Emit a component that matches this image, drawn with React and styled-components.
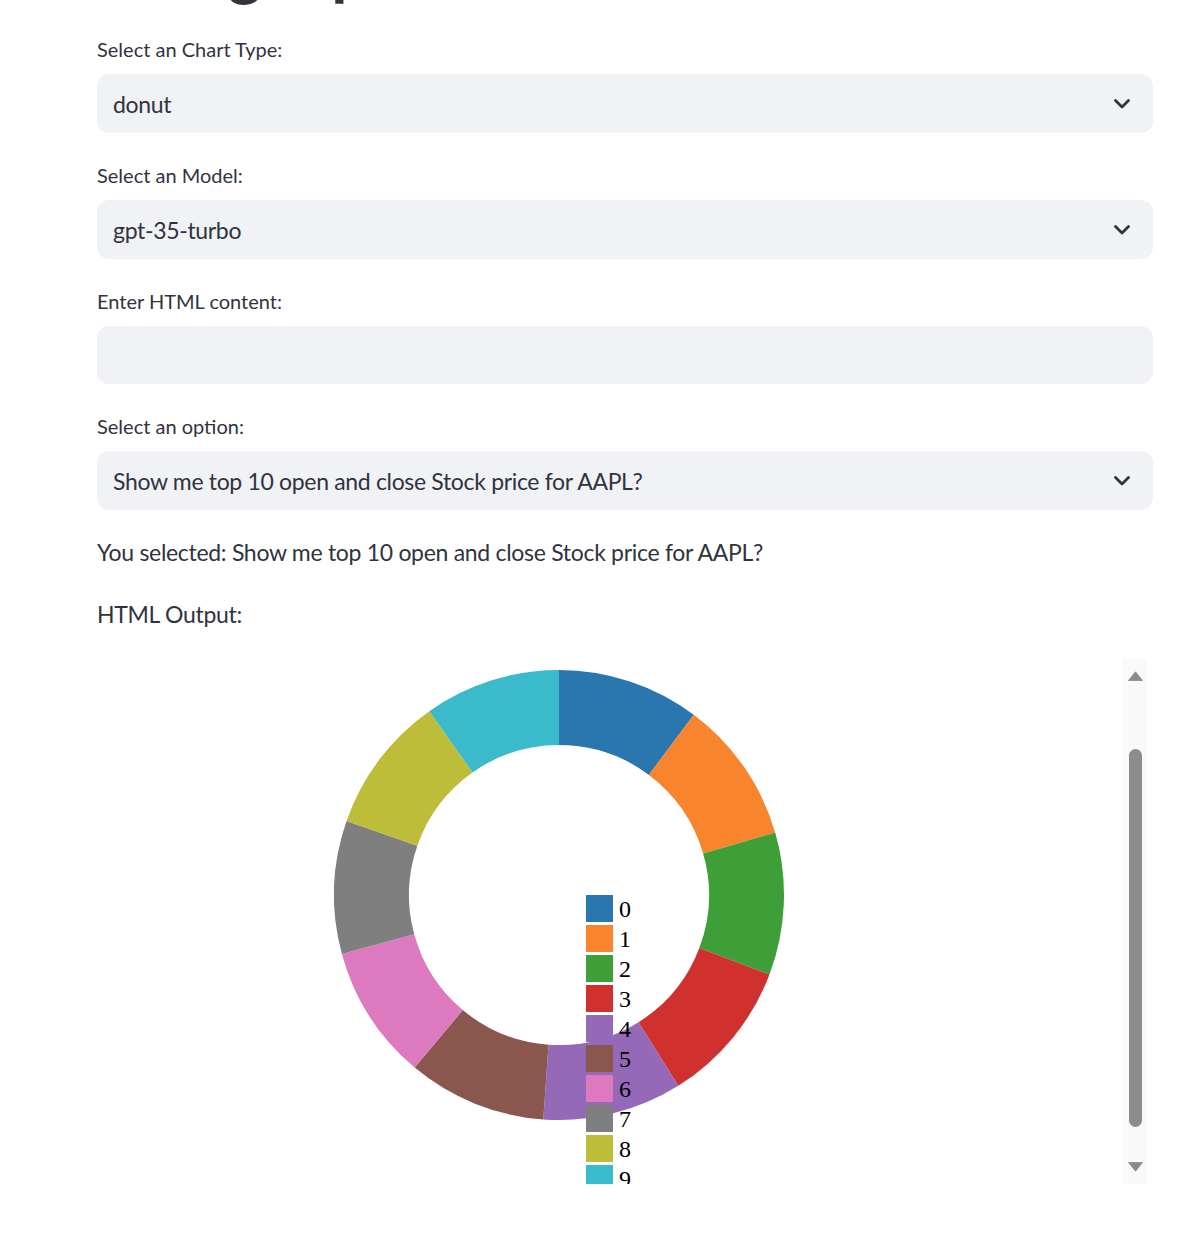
import React from "react";
import styled, { createGlobalStyle } from "styled-components";

const GlobalStyle = createGlobalStyle`
  html, body {
    margin: 0;
    padding: 0;
    background: #ffffff;
  }
  body {
    font-family: Lato, "Open Sans", sans-serif;
    color: #31333f;
    overflow: hidden;
  }
`;

const Page = styled.div`
  width: 1188px;
  height: 1236px;
  overflow: hidden;
`;

const Main = styled.div`
  width: 1056px;
  margin-left: 97px;
  display: flex;
  flex-direction: column;
`;

const Title = styled.h1`
  font-size: 66px;
  font-weight: 700;
  line-height: 1.2;
  margin: -73px 0 0 0;
  color: #31333f;
  white-space: nowrap;
`;

const Field = styled.div`
  display: flex;
  flex-direction: column;
  margin-top: ${(p) => p.$top || 24}px;
`;

const Label = styled.label`
  height: 36px;
  display: flex;
  align-items: center;
  font-size: 20px;
  color: #31333f;
  margin-bottom: 7px;
`;

const SelectBox = styled.div`
  height: 59px;
  border-radius: 12px;
  background: #f0f2f6;
  display: flex;
  align-items: center;
  justify-content: space-between;
  padding: 0 23px 0 16px;
  font-size: 23px;
  letter-spacing: -0.33px;
  color: #31333f;
`;

const TextInput = styled.div`
  height: 58px;
  border-radius: 12px;
  background: #f0f2f6;
`;

const Paragraph = styled.p`
  margin: ${(p) => p.$top}px 0 0 0;
  font-size: 23px;
  line-height: 36px;
  letter-spacing: -0.3px;
  color: #31333f;
`;

const OutputFrame = styled.div`
  width: 1050px;
  height: 525px;
  margin-top: 27px;
  display: flex;
  overflow: hidden;
`;

const ChartArea = styled.div`
  flex: 1;
  overflow: hidden;
`;

const ScrollBar = styled.div`
  width: 24px;
  background: #f9f9f9;
  display: flex;
  flex-direction: column;
  align-items: center;
`;

const ArrowButton = styled.div`
  height: 34px;
  display: flex;
  align-items: center;
  justify-content: center;
`;

const Track = styled.div`
  flex: 1;
  display: flex;
  flex-direction: column;
  align-items: center;
`;

const Thumb = styled.div`
  width: 13px;
  height: 378px;
  margin-top: 56px;
  border-radius: 7px;
  background: #8c8c8c;
`;

const Chevron = () => (
  <svg width="16" height="10" viewBox="0 0 16 10">
    <path d="M1.5 1.5 L8 8 L14.5 1.5" fill="none" stroke="#31333f" strokeWidth="2.8" strokeLinecap="round" strokeLinejoin="round" />
  </svg>
);

const Select = ({ value }) => (
  <SelectBox>
    <span>{value}</span>
    <Chevron />
  </SelectBox>
);

const colors = [
  "#2a76ae",
  "#f8852e",
  "#3e9f39",
  "#d0312f",
  "#9369b8",
  "#8a574e",
  "#dd7abf",
  "#7f7f7f",
  "#bebd3a",
  "#3bbacb",
];

const bounds = [0, 36.8, 73.9, 110.7, 148, 184, 219.9, 254.8, 289.2, 324.8, 360];

const CX = 462;
const CY = 236;
const R_OUT = 225;
const R_IN = 150;

const pt = (r, deg) => {
  const a = (deg * Math.PI) / 180;
  return `${(CX + r * Math.sin(a)).toFixed(2)} ${(CY - r * Math.cos(a)).toFixed(2)}`;
};

const arcPath = (a0, a1) => {
  const large = a1 - a0 > 180 ? 1 : 0;
  return `M${pt(R_OUT, a0)} A${R_OUT} ${R_OUT} 0 ${large} 1 ${pt(R_OUT, a1)} L${pt(R_IN, a1)} A${R_IN} ${R_IN} 0 ${large} 0 ${pt(R_IN, a0)} Z`;
};

const Donut = () => (
  <svg width="1026" height="525">
    {colors.map((c, i) => (
      <path key={i} d={arcPath(bounds[i], bounds[i + 1])} fill={c} />
    ))}
    {colors.map((c, i) => (
      <g key={"l" + i}>
        <rect x="489" y={236 + i * 30} width="27" height="27" fill={c} />
        <text x="522" y={258 + i * 30} fontFamily="'Liberation Serif', serif" fontSize="24" fill="#000">
          {i}
        </text>
      </g>
    ))}
  </svg>
);

const App = () => (
  <Page>
    <GlobalStyle />
    <Main>
      <Title>Using OpenAI for Charts</Title>
      <Field $top={25}>
        <Label>Select an Chart Type:</Label>
        <Select value="donut" />
      </Field>
      <Field>
        <Label>Select an Model:</Label>
        <Select value="gpt-35-turbo" />
      </Field>
      <Field>
        <Label>Enter HTML content:</Label>
        <TextInput />
      </Field>
      <Field>
        <Label>Select an option:</Label>
        <Select value="Show me top 10 open and close Stock price for AAPL?" />
      </Field>
      <Paragraph $top={24}>You selected: Show me top 10 open and close Stock price for AAPL?</Paragraph>
      <Paragraph $top={26}>HTML Output:</Paragraph>
      <OutputFrame>
        <ChartArea>
          <Donut />
        </ChartArea>
        <ScrollBar>
          <ArrowButton>
            <svg width="15" height="10" viewBox="0 0 15 10">
              <path d="M7.5 0.8 L14.5 9.5 L0.5 9.5 Z" fill="#8a8a8a" stroke="#8a8a8a" strokeWidth="0.8" strokeLinejoin="round" />
            </svg>
          </ArrowButton>
          <Track>
            <Thumb />
          </Track>
          <ArrowButton>
            <svg width="15" height="10" viewBox="0 0 15 10">
              <path d="M0.5 0.5 L14.5 0.5 L7.5 9.2 Z" fill="#8a8a8a" stroke="#8a8a8a" strokeWidth="0.8" strokeLinejoin="round" />
            </svg>
          </ArrowButton>
        </ScrollBar>
      </OutputFrame>
    </Main>
  </Page>
);

export default App;
